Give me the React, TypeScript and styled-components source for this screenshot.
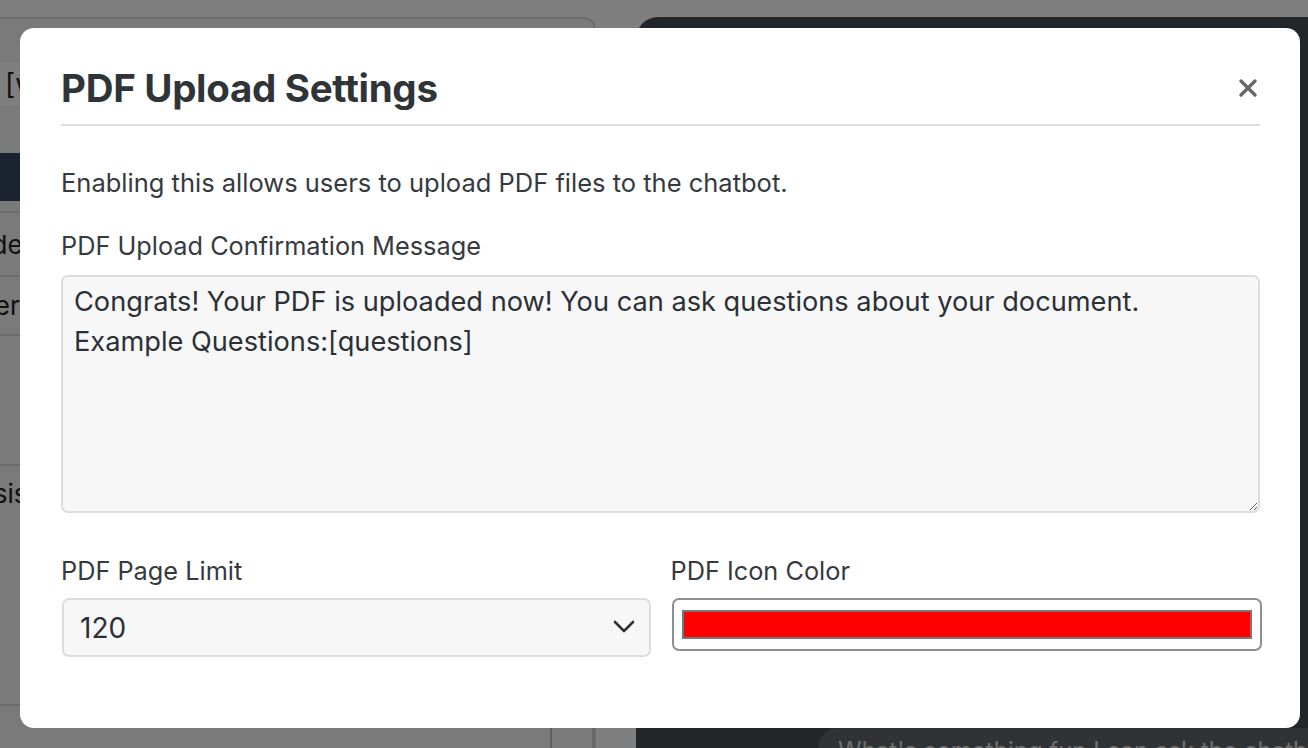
import styled, { createGlobalStyle } from "styled-components";

const GlobalStyle = createGlobalStyle`
  html, body {
    margin: 0;
    padding: 0;
    height: 100%;
    background: #ffffff;
    font-family: Inter, "Noto Sans", "Liberation Sans", sans-serif;
  }
  * { box-sizing: border-box; }
`;

const Page = styled.div`
  display: flex;
  height: 100vh;
  padding-top: 17px;
  overflow: hidden;
`;

const LeftPanel = styled.div`
  width: 598px;
  margin-left: -2px;
  background: #f4f4f4;
  border: 2px solid #d6d6d6;
  border-bottom: none;
  border-top-right-radius: 12px;
  display: flex;
  flex-direction: column;
  padding-top: 43px;
  overflow: hidden;
`;

const FakeInput = styled.div`
  height: 44px;
  margin: 0 0 25px 0;
  padding-left: 5px;
  background: #ffffff;
  font-size: 28px;
  line-height: 44px;
  color: #222;
  white-space: nowrap;
`;

const NavBand = styled.div`
  height: 48px;
  margin-top: 22px;
  background: #35465e;
`;

const Row = styled.div<{ h: number; shift?: number; line?: boolean }>`
  height: ${(p) => p.h}px;
  flex-shrink: 0;
  border-bottom: ${(p) => (p.line === false ? "none" : "2px solid #d8d8d8")};
  font-size: 26px;
  color: #222;
  display: flex;
  align-items: center;
  padding-left: 2px;
  text-indent: ${(p) => p.shift ?? 0}px;
  white-space: nowrap;
`;

const FooterRow = styled.div`
  flex: 1;
  display: flex;
  justify-content: flex-end;
`;

const FooterCell = styled.div`
  width: 44px;
  border-left: 2px solid #bdbdbd;
  border-right: 2px solid #cfcfcf;
`;

const Spacer = styled.div`
  width: 40px;
`;

const RightPanel = styled.div`
  flex: 1;
  background: #464c52;
  border-top-left-radius: 22px;
  display: flex;
  flex-direction: column;
  justify-content: flex-end;
  align-items: flex-end;
`;

const Bubble = styled.div`
  margin-right: -20px;
  margin-bottom: -20px;
  width: 510px;
  height: 40px;
  background: #5e666c;
  border-radius: 20px;
  color: #dedede;
  font-size: 24px;
  padding: 8px 20px;
  white-space: nowrap;
  overflow: hidden;
`;

const Overlay = styled.div`
  position: fixed;
  inset: 0;
  background: rgba(0, 0, 0, 0.5);
  display: flex;
  justify-content: flex-start;
  align-items: flex-start;
  padding: 28px 0 0 20px;
`;

const Modal = styled.div`
  width: 1280px;
  height: 700px;
  background: #ffffff;
  border-radius: 14px;
  padding: 0 40px 0 41px;
  color: #343a40;
`;

const Header = styled.div`
  display: flex;
  align-items: center;
  justify-content: space-between;
  padding: 38px 0 14px;
  border-bottom: 2px solid #dedede;
`;

const Title = styled.h2`
  margin: 0;
  font-size: 38.5px;
  line-height: 44px;
  font-weight: 700;
  color: #2f3439;
  letter-spacing: -0.3px;
`;

const CloseButton = styled.button`
  border: none;
  background: none;
  padding: 0;
  margin-right: 3px;
  display: flex;
  cursor: pointer;
`;

const Description = styled.p`
  margin: 41px 0 0;
  font-size: 25.5px;
  line-height: 32px;
  color: #343a40;
`;

const Label = styled.label<{ gap?: number }>`
  display: block;
  margin-top: ${(p) => p.gap ?? 0}px;
  font-size: 25.3px;
  line-height: 32px;
  color: #343a40;
`;

const TextArea = styled.textarea`
  display: block;
  width: 100%;
  height: 238px;
  margin-top: 13px;
  padding: 5px 11px;
  background: #f7f7f7;
  border: 2px solid #dddddd;
  border-radius: 7px;
  font-family: inherit;
  font-size: 27.2px;
  line-height: 40px;
  color: #2b3036;
  resize: vertical;
  outline: none;
`;

const FieldGrid = styled.div`
  display: grid;
  grid-template-columns: 1fr 1fr;
  column-gap: 20px;
  margin-top: 42px;
`;

const Field = styled.div`
  display: flex;
  flex-direction: column;
`;

const SelectWrap = styled.div`
  position: relative;
  margin-top: 11px;
  margin-left: 1px;
`;

const Select = styled.select`
  width: 100%;
  height: 59px;
  appearance: none;
  -webkit-appearance: none;
  background: #f7f7f7;
  border: 2px solid #dddddd;
  border-radius: 7px;
  padding: 0 16px;
  font-family: inherit;
  font-size: 28px;
  color: #2b3036;
  outline: none;
`;

const Chevron = styled.svg`
  position: absolute;
  right: 16px;
  top: 22px;
  pointer-events: none;
`;

const ColorInput = styled.input`
  -webkit-appearance: none;
  appearance: none;
  width: calc(100% + 1px);
  height: 53px;
  margin-top: 11px;
  margin-left: 1px;
  padding: 10px 8px;
  background: #ffffff;
  border: 2px solid #8e8e93;
  border-radius: 7px;
  cursor: pointer;

  &::-webkit-color-swatch-wrapper {
    padding: 0;
  }
  &::-webkit-color-swatch {
    border: 2px solid #777777;
    border-radius: 0;
  }
`;

export default function App() {
  return (
    <>
      <GlobalStyle />
      <Page>
        <LeftPanel>
          <FakeInput>[wpaicg_chatgpt]</FakeInput>
          <NavBand />
          <Row h={12} />
          <Row h={64} shift={-107}>Shortcode</Row>
          <Row h={59} shift={-85}>Provider</Row>
          <Row h={130} />
          <Row h={55} shift={-40} line={false}>Assistant</Row>
          <Row h={185} />
          <FooterRow>
            <FooterCell />
          </FooterRow>
        </LeftPanel>
        <Spacer />
        <RightPanel>
          <Bubble>What's something fun I can ask the chatbot?</Bubble>
        </RightPanel>
      </Page>
      <Overlay>
        <Modal>
          <Header>
            <Title>PDF Upload Settings</Title>
            <CloseButton aria-label="Close">
              <svg width="18" height="18" viewBox="0 0 18 18">
                <path d="M2 2 L16 16 M16 2 L2 16" stroke="#666" strokeWidth="3.2" strokeLinecap="round" />
              </svg>
            </CloseButton>
          </Header>
          <Description>Enabling this allows users to upload PDF files to the chatbot.</Description>
          <Label gap={31}>PDF Upload Confirmation Message</Label>
          <TextArea
            defaultValue={
              "Congrats! Your PDF is uploaded now! You can ask questions about your document.\nExample Questions:[questions]"
            }
          />
          <FieldGrid>
            <Field>
              <Label>PDF Page Limit</Label>
              <SelectWrap>
                <Select defaultValue="120">
                  <option value="50">50</option>
                  <option value="100">100</option>
                  <option value="120">120</option>
                  <option value="200">200</option>
                </Select>
                <Chevron width="22" height="14" viewBox="0 0 22 14">
                  <path d="M2 2 L11 11 L20 2" fill="none" stroke="#333" strokeWidth="2.6" strokeLinecap="round" strokeLinejoin="round" />
                </Chevron>
              </SelectWrap>
            </Field>
            <Field>
              <Label>PDF Icon Color</Label>
              <ColorInput type="color" defaultValue="#ff0000" />
            </Field>
          </FieldGrid>
        </Modal>
      </Overlay>
    </>
  );
}
